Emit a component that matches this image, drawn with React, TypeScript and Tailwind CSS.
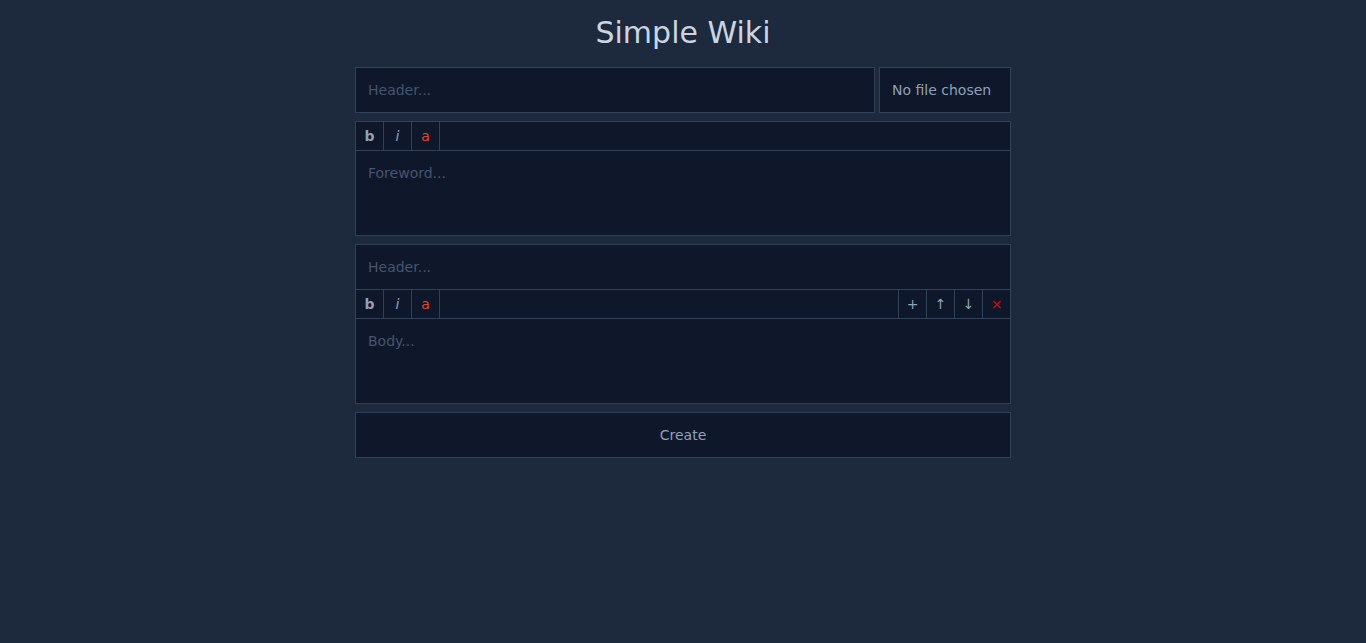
import { useState } from "react";

type Section = { id: number; header: string; body: string };

function Toolbar({ extra }: { extra?: boolean }) {
  const btn = "flex h-7 w-7 items-center justify-center border-r border-slate-700 text-sm";
  return (
    <div className="flex h-[29px] items-stretch border-b border-slate-700">
      <button type="button" className={`${btn} font-bold text-slate-400`}>b</button>
      <button type="button" className={`${btn} italic text-slate-400`}>i</button>
      <button type="button" className={`${btn} text-[#e5472b]`}>a</button>
      {extra && (
        <div className="ml-auto flex">
          <button type="button" className="flex h-7 w-7 items-center justify-center border-l border-slate-700 text-sm text-slate-400">+</button>
          <button type="button" className="flex h-7 w-7 items-center justify-center border-l border-slate-700 text-sm text-slate-400">↑</button>
          <button type="button" className="flex h-7 w-7 items-center justify-center border-l border-slate-700 text-sm text-slate-400">↓</button>
          <button type="button" className="flex h-7 w-7 items-center justify-center border-l border-slate-700 text-sm text-red-600">×</button>
        </div>
      )}
    </div>
  );
}

export default function App() {
  const [sections] = useState<Section[]>([{ id: 1, header: "", body: "" }]);

  return (
    <div
      className="min-h-[643px] bg-slate-800 text-slate-300"
      style={{ fontFamily: "'DejaVu Sans', sans-serif" }}
    >
      <div className="mx-auto flex w-[656px] flex-col gap-2 pt-[15px]">
        <h1 className="mb-[8px] text-center text-3xl leading-9 text-slate-300">Simple Wiki</h1>

        <div className="flex gap-1">
          <input
            placeholder="Header..."
            className="h-[46px] flex-1 border border-slate-700 bg-slate-900 px-3 text-sm text-slate-300 outline-none placeholder:text-slate-600"
          />
          <label className="flex h-[46px] w-[132px] items-center border border-slate-700 bg-slate-900 px-3 text-sm text-slate-400">
            No file chosen
          </label>
        </div>

        <div className="border border-slate-700 bg-slate-900">
          <Toolbar />
          <textarea
            placeholder="Foreword..."
            className="block h-[84px] w-full resize-none bg-slate-900 px-3 py-3 text-sm text-slate-300 outline-none placeholder:text-slate-600"
          />
        </div>

        {sections.map((s) => (
          <div key={s.id} className="border border-slate-700 bg-slate-900">
            <input
              placeholder="Header..."
              className="block h-[45px] w-full border-b border-slate-700 bg-slate-900 px-3 text-sm text-slate-300 outline-none placeholder:text-slate-600"
            />
            <Toolbar extra />
            <textarea
              placeholder="Body..."
              className="block h-[84px] w-full resize-none bg-slate-900 px-3 py-3 text-sm text-slate-300 outline-none placeholder:text-slate-600"
            />
          </div>
        ))}

        <button
          type="button"
          className="h-[46px] border border-slate-700 bg-slate-900 text-sm text-slate-400"
        >
          Create
        </button>
      </div>
    </div>
  );
}
